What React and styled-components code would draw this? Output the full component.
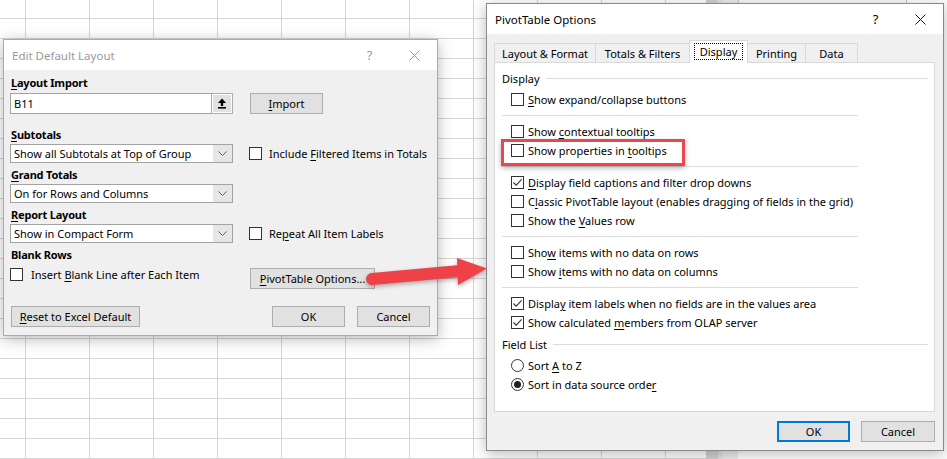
import React from "react";
import styled, { createGlobalStyle } from "styled-components";

const GlobalStyle = createGlobalStyle`
  html, body { margin: 0; padding: 0; }
  body {
    font-family: "Noto Sans", "Open Sans", sans-serif;
    font-size: 11px;
    color: #000;
    background: #fff;
  }
  * { box-sizing: border-box; }
`;

const Desktop = styled.div`
  position: relative;
  width: 947px;
  height: 459px;
  overflow: hidden;
  display: flex;
  background: #fff;
`;

const Sheet = styled.div`
  width: 706px;
  height: 100%;
  background-color: #fff;
  background-image:
    linear-gradient(to right, #d6d6d6 1px, transparent 1px),
    linear-gradient(to bottom, #d6d6d6 1px, transparent 1px);
  background-size: 64px 20px;
  background-position: 25px 18px;
`;

const ScrollTrack = styled.div`
  width: 17px;
  height: 100%;
  background: #d2d2d2;
  border-right: 5px solid #e2e2e2;
`;

const SidePane = styled.div`
  flex: 1;
  height: 100%;
  background: #fff;
  border-left: 15px solid #ececec;
  display: flex;
  flex-direction: column;
`;

const SearchBox = styled.div`
  height: 4px;
  margin-right: 40px;
  border: 1px solid #c6c6c6;
  border-top: none;
  background: #fafafa;
`;

/* ---------- windows ---------- */

const Window = styled.div`
  position: absolute;
  left: ${p => p.$x}px;
  top: ${p => p.$y}px;
  width: ${p => p.$w}px;
  height: ${p => p.$h}px;
  background: #f0f0f0;
  border: 1px solid ${p => (p.$active ? "#8a8a8a" : "#ababab")};
  box-shadow: 0 3px 14px rgba(0, 0, 0, 0.28);
  display: flex;
  flex-direction: column;
`;

const TitleBar = styled.div`
  height: 30px;
  flex: none;
  background: #fff;
  display: flex;
  align-items: center;
  padding-left: 8px;
  color: ${p => (p.$active ? "#000" : "#9a9a9a")};
`;

const TitleText = styled.div`
  flex: 1;
  font-size: 11.5px;
`;

const CaptionButton = styled.div`
  width: 45px;
  height: 30px;
  display: flex;
  align-items: center;
  justify-content: center;
  font-size: 13px;
  color: inherit;
`;

const U = styled.span`
  text-decoration: underline;
  text-underline-offset: 2px;
  text-decoration-thickness: 1px;
`;

function CloseGlyph({ color }) {
  return (
    <svg width="11" height="11" viewBox="0 0 11 11">
      <path d="M0.5 0.5 L10.5 10.5 M10.5 0.5 L0.5 10.5" stroke={color} strokeWidth="1" fill="none" />
    </svg>
  );
}

/* ---------- left dialog ---------- */

const LeftBody = styled.div`
  flex: 1;
  padding: 6px 7px 0 6px;
  display: flex;
  flex-direction: column;
`;

const GroupLabel = styled.div`
  font-weight: 700;
  letter-spacing: -0.2px;
  line-height: 14px;
  height: 14px;
  padding-left: 1px;
  margin-top: ${p => p.$mt || 0}px;
`;

const FormRow = styled.div`
  display: grid;
  grid-template-columns: 223px auto;
  column-gap: 16px;
  align-items: ${p => p.$align || "center"};
  margin-top: ${p => p.$mt || 0}px;
`;

const TextInput = styled.div`
  height: 21px;
  background: #fff;
  border: 1px solid #a3a3a3;
  display: flex;
  align-items: center;
`;

const InputText = styled.div`
  flex: 1;
  padding-left: 3px;
`;

const PickButton = styled.div`
  width: 20px;
  height: 19px;
  background: #e1e1e1;
  border: 1px solid #fff;
  outline: 1px solid #adadad;
  display: flex;
  align-items: center;
  justify-content: center;
`;

const Select = styled.div`
  height: 19px;
  background: #fff;
  border: 1px solid #a3a3a3;
  display: flex;
  align-items: center;
`;

const SelectText = styled.div`
  flex: 1;
  padding-left: 3px;
  white-space: nowrap;
`;

const SelectArrow = styled.div`
  width: 19px;
  height: 17px;
  background: #e6e6e6;
  display: flex;
  align-items: center;
  justify-content: center;
`;

const PushButton = styled.div`
  width: ${p => p.$w}px;
  height: 21px;
  background: #e1e1e1;
  border: ${p => (p.$default ? "2px solid #0078d7" : "1px solid #adadad")};
  display: flex;
  align-items: center;
  justify-content: center;
  white-space: nowrap;
  margin-left: ${p => p.$ml || 0}px;
`;

const CheckLine = styled.div`
  display: flex;
  align-items: center;
  gap: ${p => p.$gap || 7}px;
  white-space: nowrap;
  height: 13px;
`;

const Box = styled.div`
  width: 13px;
  height: 13px;
  flex: none;
  background: #fff;
  border: 1px solid #333;
  display: flex;
  align-items: center;
  justify-content: center;
`;

const Radio = styled(Box)`
  border-radius: 50%;
`;

const RadioDot = styled.div`
  width: 7px;
  height: 7px;
  border-radius: 50%;
  background: #222;
`;

const LeftFooter = styled.div`
  display: flex;
  align-items: center;
  gap: 12px;
  margin-top: 17px;
`;

const Spacer = styled.div`
  flex: 1;
`;

function Checkbox({ checked }) {
  return (
    <Box>
      {checked && (
        <svg width="11" height="11" viewBox="0 0 11 11">
          <path d="M1.5 5.5 L4.2 8.2 L9.6 2.4" stroke="#333" strokeWidth="1.1" fill="none" />
        </svg>
      )}
    </Box>
  );
}

function Chevron() {
  return (
    <svg width="9" height="5" viewBox="0 0 9 5">
      <path d="M0.5 0.5 L4.5 4.5 L8.5 0.5" stroke="#606060" strokeWidth="1" fill="none" />
    </svg>
  );
}

function UploadGlyph() {
  return (
    <svg width="10" height="11" viewBox="0 0 10 11">
      <path d="M5 0.5 L9 5 H6.2 V8 H3.8 V5 H1 Z" fill="#000" />
      <rect x="1" y="9" width="8" height="1.6" fill="#000" />
    </svg>
  );
}

function DropDown({ children }) {
  return (
    <Select>
      <SelectText>{children}</SelectText>
      <SelectArrow>
        <Chevron />
      </SelectArrow>
    </Select>
  );
}

function EditDefaultLayout() {
  return (
    <Window $x={3} $y={39} $w={435} $h={297}>
      <TitleBar>
        <TitleText>Edit Default Layout</TitleText>
        <CaptionButton>?</CaptionButton>
        <CaptionButton>
          <CloseGlyph color="#9a9a9a" />
        </CaptionButton>
      </TitleBar>
      <LeftBody>
        <GroupLabel>
          <U>L</U>ayout Import
        </GroupLabel>
        <FormRow $mt={3}>
          <TextInput>
            <InputText>B11</InputText>
            <PickButton>
              <UploadGlyph />
            </PickButton>
          </TextInput>
          <PushButton $w={73} $ml={1}>
            <span>
              <U>I</U>mport
            </span>
          </PushButton>
        </FormRow>

        <GroupLabel $mt={14}>
          <U>S</U>ubtotals
        </GroupLabel>
        <FormRow $mt={2}>
          <DropDown>Show all Subtotals at Top of Group</DropDown>
          <CheckLine>
            <Checkbox />
            <span>
              Include <U>F</U>iltered Items in Totals
            </span>
          </CheckLine>
        </FormRow>

        <GroupLabel $mt={5}>
          <U>G</U>rand Totals
        </GroupLabel>
        <FormRow $mt={2}>
          <DropDown>On for Rows and Columns</DropDown>
        </FormRow>

        <GroupLabel $mt={5}>
          <U>R</U>eport Layout
        </GroupLabel>
        <FormRow $mt={2}>
          <DropDown>Show in Compact Form</DropDown>
          <CheckLine>
            <Checkbox />
            <span>
              Re<U>p</U>eat All Item Labels
            </span>
          </CheckLine>
        </FormRow>

        <GroupLabel $mt={5}>Blank Rows</GroupLabel>
        <FormRow $mt={6} $align="start">
          <CheckLine $gap={8}>
            <Checkbox />
            <span>
              Insert <U>B</U>lank Line after Each Item
            </span>
          </CheckLine>
          <PushButton $w={125} $ml={1}>
            <span>
              <U>P</U>ivotTable Options...
            </span>
          </PushButton>
        </FormRow>

        <LeftFooter>
          <PushButton $w={129} $ml={1}>
            <span>
              <U>R</U>eset to Excel Default
            </span>
          </PushButton>
          <Spacer />
          <PushButton $w={73}>OK</PushButton>
          <PushButton $w={73}>Cancel</PushButton>
        </LeftFooter>
      </LeftBody>
    </Window>
  );
}

/* ---------- right dialog ---------- */

const RightBody = styled.div`
  flex: 1;
  padding: 6px 8px 0 7px;
  display: flex;
  flex-direction: column;
`;

const TabStrip = styled.div`
  display: flex;
  align-items: flex-end;
  height: 23px;
  margin-bottom: -1px;
  position: relative;
  z-index: 1;
`;

const Tab = styled.div`
  width: ${p => p.$w}px;
  height: ${p => (p.$selected ? 23 : 20)}px;
  margin-left: ${p => (p.$first ? 0 : -1)}px;
  background: ${p => (p.$selected ? "#fff" : "#f0f0f0")};
  border: 1px solid #d9d9d9;
  border-bottom: ${p => (p.$selected ? "none" : "1px solid #d9d9d9")};
  position: relative;
  z-index: ${p => (p.$selected ? 2 : 1)};
  display: flex;
  align-items: center;
  justify-content: center;
  white-space: nowrap;
  padding-bottom: ${p => (p.$selected ? 2 : 0)}px;
`;

const FocusText = styled.span`
  outline: 1px dotted #000;
  padding: 0 5px;
  line-height: 15px;
`;

const Panel = styled.div`
  height: 350px;
  background: #fff;
  border: 1px solid #d9d9d9;
  padding: 7px 6px 0 7px;
  display: flex;
  flex-direction: column;
`;

const SectionHead = styled.div`
  display: flex;
  align-items: center;
  height: 16px;
  margin-top: ${p => p.$mt || 0}px;
  margin-bottom: 4px;
  white-space: nowrap;
`;

const HeadRule = styled.div`
  flex: 1;
  height: 1px;
  margin-left: 6px;
  background: #dcdcdc;
`;

const Option = styled.div`
  height: 19px;
  display: flex;
  align-items: center;
  gap: 4px;
  padding-left: 9px;
  white-space: nowrap;
`;

const Divider = styled.div`
  width: 356px;
  height: 1px;
  background: #dcdcdc;
  margin: 6px 0 6px;
`;

const RightFooter = styled.div`
  display: flex;
  justify-content: flex-end;
  gap: 11px;
  margin-top: 9px;
`;

function Check({ checked, children }) {
  return (
    <Option>
      <Checkbox checked={checked} />
      <span>{children}</span>
    </Option>
  );
}

function RadioOption({ selected, children }) {
  return (
    <Option>
      <Radio>{selected && <RadioDot />}</Radio>
      <span>{children}</span>
    </Option>
  );
}

function PivotTableOptions() {
  const tabs = [
    { label: "Layout & Format", w: 102 },
    { label: "Totals & Filters", w: 95 },
    { label: "Display", w: 59, selected: true },
    { label: "Printing", w: 59 },
    { label: "Data", w: 53 },
  ];
  return (
    <Window $x={486} $y={3} $w={458} $h={448} $active>
      <TitleBar $active>
        <TitleText>PivotTable Options</TitleText>
        <CaptionButton>?</CaptionButton>
        <CaptionButton>
          <CloseGlyph color="#111" />
        </CaptionButton>
      </TitleBar>
      <RightBody>
        <TabStrip>
          {tabs.map((t, i) => (
            <Tab key={t.label} $w={t.w} $first={i === 0} $selected={t.selected}>
              {t.selected ? <FocusText>{t.label}</FocusText> : t.label}
            </Tab>
          ))}
        </TabStrip>
        <Panel>
          <SectionHead>
            Display
            <HeadRule />
          </SectionHead>
          <Check>
            <U>S</U>how expand/collapse buttons
          </Check>
          <Divider />
          <Check>
            Show <U>c</U>ontextual tooltips
          </Check>
          <Check>
            Show properties in <U>t</U>ooltips
          </Check>
          <Divider />
          <Check checked>
            <U>D</U>isplay field captions and filter drop downs
          </Check>
          <Check>
            C<U>l</U>assic PivotTable layout (enables dragging of fields in the grid)
          </Check>
          <Check>
            Show the <U>V</U>alues row
          </Check>
          <Divider />
          <Check>
            Sho<U>w</U> items with no data on rows
          </Check>
          <Check>
            Show <U>i</U>tems with no data on columns
          </Check>
          <Divider />
          <Check checked>
            Displa<U>y</U> item labels when no fields are in the values area
          </Check>
          <Check checked>
            Show calculated <U>m</U>embers from OLAP server
          </Check>
          <SectionHead $mt={4}>
            Field List
            <HeadRule />
          </SectionHead>
          <RadioOption>
            Sort <U>A</U> to Z
          </RadioOption>
          <RadioOption selected>
            Sort in data source orde<U>r</U>
          </RadioOption>
        </Panel>
        <RightFooter>
          <PushButton $w={73} $default>
            OK
          </PushButton>
          <PushButton $w={74}>Cancel</PushButton>
        </RightFooter>
      </RightBody>
    </Window>
  );
}

/* ---------- annotations ---------- */

const Highlight = styled.div`
  position: absolute;
  left: 501px;
  top: 139px;
  width: 184px;
  height: 27px;
  border: 3px solid #e9474e;
  box-shadow: 0 2px 5px rgba(0, 0, 0, 0.3);
`;

const ArrowLayer = styled.svg`
  position: absolute;
  left: 360px;
  top: 240px;
  overflow: visible;
  filter: drop-shadow(0 2px 2px rgba(0, 0, 0, 0.3));
`;

function RedArrow() {
  return (
    <ArrowLayer width="140" height="60" viewBox="0 0 140 60">
      <path d="M12 39 L100 31" stroke="#ef4248" strokeWidth="12" strokeLinecap="round" />
      <path d="M97 18 L127 28.5 L98 45 Z" fill="#ef4248" />
    </ArrowLayer>
  );
}

export default function App() {
  return (
    <>
      <GlobalStyle />
      <Desktop>
        <Sheet />
        <ScrollTrack />
        <SidePane>
          <SearchBox />
        </SidePane>
        <EditDefaultLayout />
        <PivotTableOptions />
        <Highlight />
        <RedArrow />
      </Desktop>
    </>
  );
}
